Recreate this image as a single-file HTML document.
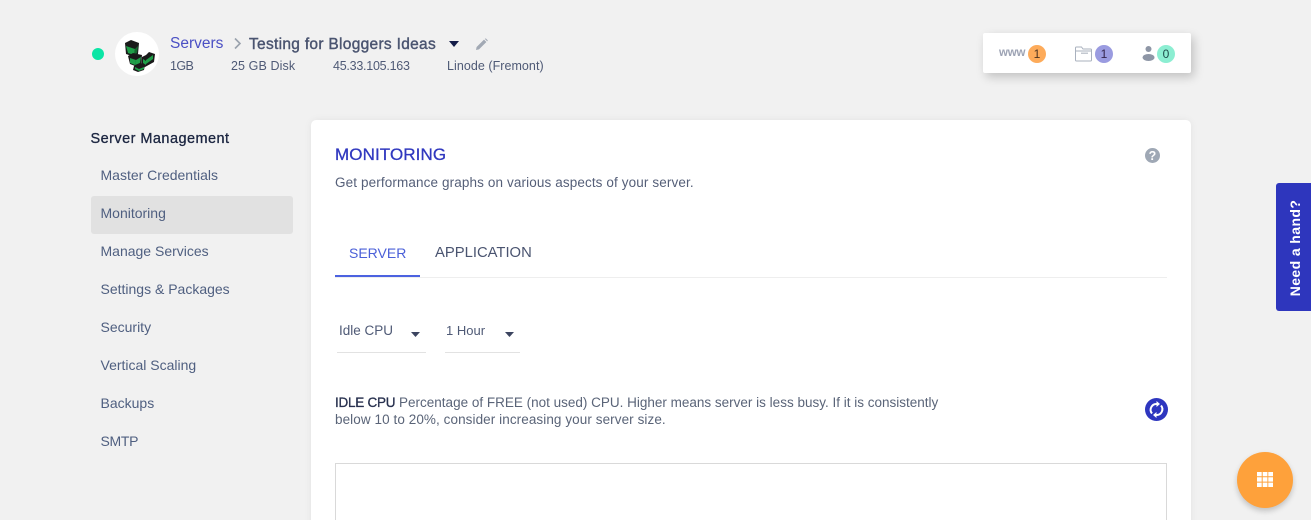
<!DOCTYPE html>
<html><head><meta charset="utf-8"><style>
html,body{margin:0;padding:0;width:1311px;height:520px;overflow:hidden;background:#f1f1f1}
#p{position:relative;width:1311px;height:520px;overflow:hidden;background:#f1f1f1;font-family:"Liberation Sans",sans-serif;color:#4f5a76}
.t{position:absolute;white-space:nowrap;line-height:18px;font-size:13px}
.a{position:absolute}
.m{color:#4f5f80;font-size:14px;left:100.5px}
</style></head><body><div id="p">
<div class="a" style="left:92px;top:48px;width:12px;height:12px;border-radius:50%;background:#0be5a5"></div>
<div class="a" style="left:115px;top:32px;width:44px;height:44px;border-radius:50%;background:#fff"></div>
<svg class="a" style="left:115px;top:32px" width="44" height="44" viewBox="0 0 44 44">
<path d="M10 11l6-3 8 3-1 11-6 2-6-2z" fill="#1a1a1a"/><path d="M11 14l9 3-1 6-6-2z" fill="#1f9e48"/><path d="M20 17l3-3-1 7-3 2z" fill="#14692f"/>
<path d="M13 24l5-3 9 2-1 9-6 2-5-2z" fill="#1a1a1a"/><path d="M15 26l6 2-1 5-5-2z" fill="#1f9e48"/><path d="M21 28l5-3-1 6-5 2z" fill="#1f9e48"/>
<path d="M19 34l6-3 5 2-1 5-6 2-5-2z" fill="#1a1a1a"/><path d="M20 35l4 2v2l-4-2z" fill="#1f9e48"/><path d="M24 37l5-2v2l-5 2z" fill="#1f9e48"/>
<path d="M27 25l4-2 3-3 6 2-1 8-9 5-4-2z" fill="#1a1a1a"/><path d="M28 27l3 2v4l-3-2z" fill="#1f9e48"/><path d="M31 28l7-5v4l-7 5z" fill="#1f9e48"/>
</svg>
<div class="t" style="left:170px;top:35px;font-size:15.500px;color:#4b50c4">Servers</div>
<svg class="a" style="left:233px;top:37px" width="10" height="13" viewBox="0 0 10 13"><path d="M2 1.500l5 5-5 5" fill="none" stroke="#9aa2ad" stroke-width="1.6"/></svg>
<div class="t" style="left:249px;top:36px;font-size:15.500px;letter-spacing:.3px;color:#4a5470;-webkit-text-stroke:.4px #4a5470">Testing for Bloggers Ideas</div>
<svg class="a" style="left:449px;top:41px" width="11" height="7" viewBox="0 0 11 7"><path d="M0 0h10l-5 6z" fill="#141c48"/></svg>
<svg class="a" style="left:475px;top:38px" width="13" height="13" viewBox="0 0 13 13"><path d="M1 12l.6-3L9 1.600 11.400 4 4 11.400zM9.800.9l1-.5 2 2-.6 1z" fill="#a2a9b4"/></svg>
<div class="t" style="left:170px;top:57px;font-size:12.500px;letter-spacing:-.6px">1GB</div>
<div class="t" style="left:231px;top:57px;font-size:12.500px;letter-spacing:.1px">25 GB Disk</div>
<div class="t" style="left:333px;top:57px;font-size:12.500px;letter-spacing:-.25px">45.33.105.163</div>
<div class="t" style="left:447px;top:57px;font-size:12.500px;letter-spacing:.05px">Linode (Fremont)</div>

<div class="a" style="left:983px;top:33px;width:208px;height:40px;background:#fff;border-radius:2px;box-shadow:3px 4px 10px rgba(0,0,0,.2)"></div>
<div class="t" style="left:999px;top:44px;font-size:11.500px;letter-spacing:-.2px;font-weight:700;color:#9da3b4">www</div>
<div class="a" style="left:1028px;top:45px;width:18px;height:18px;border-radius:50%;background:#fdab5a;text-align:center;font-size:12px;line-height:18px;color:#4b3320">1</div>
<svg class="a" style="left:1075px;top:45px" width="17" height="18" viewBox="0 0 17 18"><path d="M.5 15V3q0-1 1-1h5l1.500 2h7.500q1 0 1 1v10q0 1-1 1h-14q-1 0-1-1zM.5 6h16" fill="none" stroke="#a9b1be"/><path d="M6 7.500h7V9H6z" fill="#c3c8d0"/></svg>
<div class="a" style="left:1095px;top:45px;width:18px;height:18px;border-radius:50%;background:#9a9be0;text-align:center;font-size:12px;line-height:18px;color:#33244a">1</div>
<svg class="a" style="left:1142px;top:45px" width="13" height="17" viewBox="0 0 13 17"><circle cx="6.500" cy="4" r="3" fill="#8e96a6"/><ellipse cx="6.500" cy="12.500" rx="6" ry="3.500" fill="#8e96a6"/></svg>
<div class="a" style="left:1157px;top:45px;width:18px;height:18px;border-radius:50%;background:#8ceed2;text-align:center;font-size:12px;line-height:18px;color:#1d4a4a">0</div>

<div class="t" style="left:90.500px;top:130px;font-size:14.500px;letter-spacing:.45px;color:#1b2540;-webkit-text-stroke:.3px #1b2540">Server Management</div>
<div class="a" style="left:91px;top:196px;width:202px;height:38px;background:#e1e1e1;border-radius:3px"></div>
<div class="t m" style="top:166px">Master Credentials</div>
<div class="t m" style="top:204px">Monitoring</div>
<div class="t m" style="top:242px">Manage Services</div>
<div class="t m" style="top:280px">Settings &amp; Packages</div>
<div class="t m" style="top:318px">Security</div>
<div class="t m" style="top:356px">Vertical Scaling</div>
<div class="t m" style="top:394px">Backups</div>
<div class="t m" style="top:432px;letter-spacing:-.3px">SMTP</div>

<div class="a" style="left:311px;top:120px;width:880px;height:420px;background:#fff;border-radius:5px;box-shadow:0 0 8px rgba(0,0,0,.06)"></div>
<div class="t" style="left:335px;top:145.500px;font-size:17px;letter-spacing:.1px;color:#3038bf;-webkit-text-stroke:.3px #3038bf">MONITORING</div>
<div class="t" style="left:335px;top:174px;font-size:13.500px;letter-spacing:.12px;color:#555f78">Get performance graphs on various aspects of your server.</div>
<svg class="a" style="left:1145px;top:148px" width="15" height="15" viewBox="0 0 15 15"><circle cx="7.500" cy="7.500" r="7.500" fill="#9fa8b5"/><text x="7.500" y="12" font-family="Liberation Sans" font-size="12.500" font-weight="700" fill="#fff" text-anchor="middle">?</text></svg>

<div class="t" style="left:349px;top:244px;font-size:14px;color:#4a5fd8">SERVER</div>
<div class="t" style="left:435px;top:244px;font-size:14.800px;color:#4a5470">APPLICATION</div>
<div class="a" style="left:335px;top:277px;width:832px;height:1px;background:#eeeeee"></div>
<div class="a" style="left:335px;top:275px;width:85px;height:2px;background:#4c62e0"></div>

<div class="t" style="left:339px;top:322px;font-size:13.500px">Idle CPU</div>
<svg class="a" style="left:411px;top:332px" width="9" height="5" viewBox="0 0 9 5"><path d="M0 0h9L4.500 5z" fill="#3c4560"/></svg>
<div class="a" style="left:337px;top:352px;width:89px;height:1px;background:#e2e2e2"></div>
<div class="t" style="left:446px;top:322px;font-size:13px">1 Hour</div>
<svg class="a" style="left:505px;top:332px" width="9" height="5" viewBox="0 0 9 5"><path d="M0 0h9L4.500 5z" fill="#3c4560"/></svg>
<div class="a" style="left:445px;top:352px;width:75px;height:1px;background:#e2e2e2"></div>

<div class="t" style="left:335px;top:394px;font-size:13.500px;color:#5a6478"><span style="color:#27304e;letter-spacing:-.25px;-webkit-text-stroke:.3px #27304e">IDLE CPU</span> Percentage of FREE (not used) CPU. Higher means server is less busy. If it is consistently</div>
<div class="t" style="left:335px;top:411px;font-size:13.500px;letter-spacing:.08px;color:#5a6478">below 10 to 20%, consider increasing your server size.</div>

<svg class="a" style="left:1145px;top:398px" width="23" height="23" viewBox="0 0 23 23"><circle cx="11.500" cy="11.500" r="11.500" fill="#2e36bf"/><path d="M7 15.500A5.800 5.800 0 0 1 12 6M16 7.500A5.800 5.800 0 0 1 11 17" fill="none" stroke="#fff" stroke-width="2"/><path d="M11.500 3L15 6l-3.500 3zM11.500 14L8 17l3.500 3z" fill="#fff"/></svg>

<div class="a" style="left:335px;top:463px;width:830px;height:70px;border:1px solid #d9d9d9"></div>

<div class="a" style="left:1276px;top:183px;width:40px;height:128px;background:#2e36bd;border-radius:3px"></div>
<div class="t" style="left:1295px;top:247.500px;font-size:14px;font-weight:700;color:#fff;letter-spacing:.4px;transform:translate(-50%,-50%) rotate(-90deg)">Need a hand?</div>

<div class="a" style="left:1237px;top:452px;width:56px;height:56px;border-radius:50%;background:#fea13b;box-shadow:0 3px 6px rgba(0,0,0,.2)"></div>
<svg class="a" style="left:1257px;top:472px" width="16" height="16" viewBox="0 0 16 16" fill="#fff"><path d="M0 0h4.700v4.300H0zM5.700 0h4.700v4.300H5.700zM11.300 0H16v4.300h-4.700zM0 5.300h4.700v4.300H0zM5.700 5.300h4.700v4.300H5.700zM11.300 5.300H16v4.300h-4.700zM0 10.600h4.700V15H0zM5.700 10.600h4.700V15H5.700zM11.300 10.600H16V15h-4.700z"/></svg>
</div></body></html>
